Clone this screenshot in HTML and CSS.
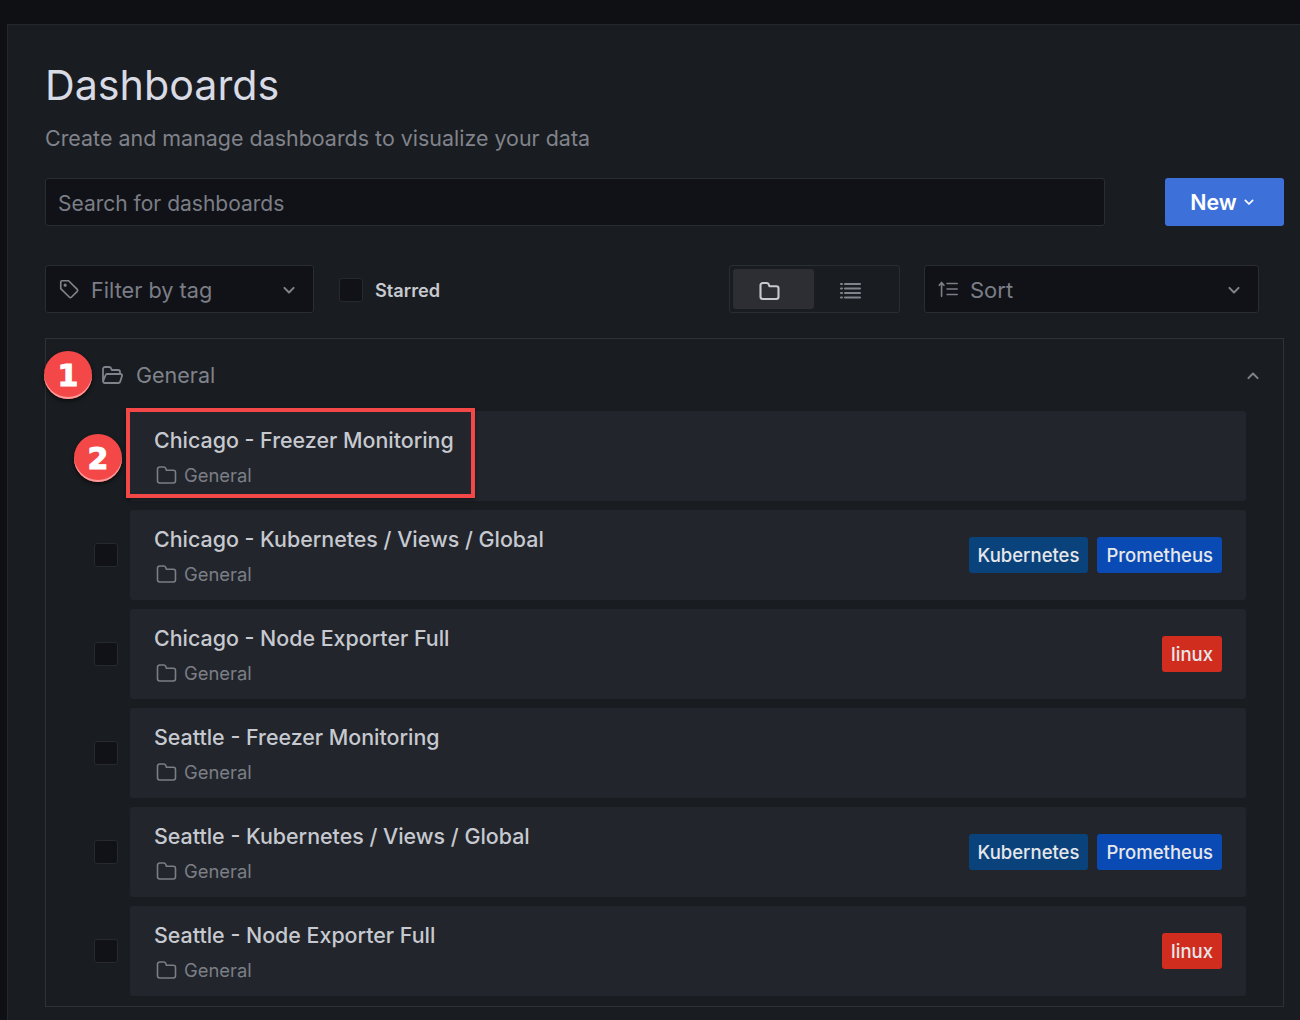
FILE: index.html
```html
<!DOCTYPE html>
<html lang="en">
<head>
    <meta charset="UTF-8">
    <title>Dashboards</title>
    <link rel="stylesheet" href="styles.css">
</head>
<body>
<svg class="sprites" width="0" height="0">
    <symbol id="folder" viewBox="0 0 24 24"><path d="M3.5 6.2a2.2 2.2 0 0 1 2.2-2.2h4.1c.9 0 1.6.5 1.9 1.3l.7 1.9h6.9a2.2 2.2 0 0 1 2.2 2.2v8.4a2.2 2.2 0 0 1-2.2 2.2H5.7a2.2 2.2 0 0 1-2.2-2.2z"/></symbol>
    <symbol id="chevron" viewBox="0 0 24 24"><path d="M6.5 9.5 12 15l5.5-5.500"/></symbol>
</svg>
<main class="panel">
    <h1 class="title">Dashboards</h1>
    <p class="subtitle">Create and manage dashboards to visualize your data</p>

    <div class="search-row">
        <div class="input search">Search for dashboards</div>
        <button class="new-button">New <svg class="icon"><use href="#chevron"/></svg></button>
    </div>

    <div class="filter-row">
        <div class="input filter">
            <svg class="icon tag-icon" viewBox="0 0 24 24"><path d="M3 4.500A1.500 1.500 0 0 1 4.500 3h7l9.500 9.500a1.500 1.500 0 0 1 0 2.100L14.600 21a1.500 1.500 0 0 1-2.100 0L3 11.500z"/><circle cx="7.800" cy="7.800" r=".8"/></svg>
            <span class="grow">Filter by tag</span>
            <svg class="icon chevron"><use href="#chevron"/></svg>
        </div>
        <label class="starred"><span class="checkbox"></span>Starred</label>
        <div class="toggle">
            <span class="toggle-item active"><svg class="icon"><use href="#folder"/></svg></span>
            <span class="toggle-item">
                <svg class="icon" viewBox="0 0 24 24"><path d="M3 6.500h1M7 6.500h15M3 11h1M7 11h15M3 15.500h1M7 15.500h15M3 20h1M7 20h15" transform="translate(0 -1.500)"/></svg>
            </span>
        </div>
        <div class="input sort">
            <svg class="icon sort-icon" viewBox="0 0 24 24"><path d="M5 20V5M2.500 8 5 5l2.500 3M11 6h11M11 12h11M11 18h11"/></svg>
            <span class="grow">Sort</span>
            <svg class="icon chevron"><use href="#chevron"/></svg>
        </div>
    </div>

    <section class="results">
        <header class="section-header">
            <span class="marker marker-one">1</span>
            <svg class="icon open-folder" viewBox="0 0 24 24"><path d="M3 18.500V6a2 2 0 0 1 2-2h4.200c.8 0 1.500.5 1.800 1.200L11.700 7H18a2 2 0 0 1 2 2v2M3 18.500 5.600 12a1.500 1.500 0 0 1 1.400-1h13.600a1.500 1.500 0 0 1 1.400 2l-1.800 5.600a2 2 0 0 1-1.900 1.400H5a2 2 0 0 1-2-1.500z"/></svg>
            <span class="grow">General</span>
            <svg class="icon collapse"><use href="#chevron"/></svg>
        </header>

        <div class="item">
            <span class="item-check"></span>
            <span class="marker marker-two">2</span>
            <a class="card">
                <span class="highlight"></span>
                <div class="card-text">
                    <div class="card-title">Chicago - Freezer Monitoring</div>
                    <div class="card-folder"><svg class="icon"><use href="#folder"/></svg>General</div>
                </div>
            </a>
        </div>
        <div class="item">
            <span class="item-check"><span class="checkbox"></span></span>
            <a class="card">
                <div class="card-text">
                    <div class="card-title">Chicago - Kubernetes / Views / Global</div>
                    <div class="card-folder"><svg class="icon"><use href="#folder"/></svg>General</div>
                </div>
                <span class="tag tag-kubernetes">Kubernetes</span>
                <span class="tag tag-prometheus">Prometheus</span>
            </a>
        </div>
        <div class="item">
            <span class="item-check"><span class="checkbox"></span></span>
            <a class="card">
                <div class="card-text">
                    <div class="card-title">Chicago - Node Exporter Full</div>
                    <div class="card-folder"><svg class="icon"><use href="#folder"/></svg>General</div>
                </div>
                <span class="tag tag-linux">linux</span>
            </a>
        </div>
        <div class="item">
            <span class="item-check"><span class="checkbox"></span></span>
            <a class="card">
                <div class="card-text">
                    <div class="card-title">Seattle - Freezer Monitoring</div>
                    <div class="card-folder"><svg class="icon"><use href="#folder"/></svg>General</div>
                </div>
            </a>
        </div>
        <div class="item">
            <span class="item-check"><span class="checkbox"></span></span>
            <a class="card">
                <div class="card-text">
                    <div class="card-title">Seattle - Kubernetes / Views / Global</div>
                    <div class="card-folder"><svg class="icon"><use href="#folder"/></svg>General</div>
                </div>
                <span class="tag tag-kubernetes">Kubernetes</span>
                <span class="tag tag-prometheus">Prometheus</span>
            </a>
        </div>
        <div class="item">
            <span class="item-check"><span class="checkbox"></span></span>
            <a class="card">
                <div class="card-text">
                    <div class="card-title">Seattle - Node Exporter Full</div>
                    <div class="card-folder"><svg class="icon"><use href="#folder"/></svg>General</div>
                </div>
                <span class="tag tag-linux">linux</span>
            </a>
        </div>
    </section>
</main>
</body>
</html>
```

FILE: styles.css
```css
html, body {
    height: 100%;
}

body {
    margin: 0;
    padding-top: 24px;
    box-sizing: border-box;
    overflow: hidden;
    background-color: #0f1014;
    font-family: Inter, "Liberation Sans", sans-serif;
    color: #c7c9d0;
}

.sprites {
    position: absolute;
}

.icon {
    width: 24px;
    height: 24px;
    fill: none;
    stroke: currentColor;
    stroke-width: 1.8;
    stroke-linecap: round;
    stroke-linejoin: round;
    flex: none;
}

.grow {
    flex: 1;
}

.panel {
    height: 100%;
    margin-left: 7px;
    padding: 0 16px 0 37px;
    border: 1px solid #24272c;
    border-right: none;
    background-color: #191c20;
}

.title {
    margin: 0;
    padding-top: 35px;
    font-size: 41.2px;
    font-weight: 400;
    line-height: 50px;
    color: #d8dae4;
}

.subtitle {
    margin: 14px 0 0;
    font-size: 21.45px;
    line-height: 28px;
    color: #80838b;
}

.input {
    display: flex;
    align-items: center;
    box-sizing: border-box;
    height: 48px;
    padding: 2px 12px 0;
    border: 1px solid #2a2d33;
    border-radius: 3px;
    background-color: #111217;
    font-size: 21px;
    color: #7b7e86;
}

.search-row {
    display: flex;
    justify-content: space-between;
    margin-top: 26px;
}

.search {
    width: 1060px;
    padding-top: 3px;
}

.new-button {
    display: flex;
    align-items: center;
    justify-content: center;
    gap: 4px;
    width: 119px;
    height: 48px;
    padding: 0 2px 0 0;
    border: none;
    border-radius: 3px;
    background-color: #3d71d9;
    font: 600 21.4px Inter, "Liberation Sans", sans-serif;
    color: #fff;
}

.new-button .icon {
    width: 16px;
    height: 16px;
    stroke-width: 2.600;
}

.filter-row {
    display: flex;
    align-items: center;
    margin-top: 39px;
}

.filter {
    width: 269px;
    font-size: 21.7px;
}

.tag-icon {
    margin-right: 11px;
    margin-top: -2px;
    width: 22px;
    height: 22px;
    color: #80838b;
}

.chevron {
    width: 20px;
    height: 20px;
    margin-right: 2px;
    stroke-width: 2.400;
    color: #80838b;
}

.starred {
    display: flex;
    align-items: center;
    gap: 12px;
    margin: 2px 0 0 25px;
    width: 390px;
    font-size: 18.2px;
    font-weight: 600;
    color: #c7c9d0;
}

.checkbox {
    display: block;
    box-sizing: border-box;
    width: 24px;
    height: 24px;
    border: 1px solid #26292e;
    border-radius: 3px;
    background-color: #111217;
}

.toggle {
    display: flex;
    box-sizing: border-box;
    width: 171px;
    height: 48px;
    padding: 3px;
    border: 1px solid #2a2d33;
    border-radius: 3px;
}

.toggle-item {
    display: flex;
    align-items: center;
    justify-content: center;
    width: 81px;
    padding: 3px 10px 0 0;
    box-sizing: border-box;
    color: #80838b;
}

.toggle-item .icon {
    stroke-width: 2.100;
}

.toggle-item.active {
    border-radius: 3px;
    background-color: #2c2e33;
    color: #c7c9d0;
}

.sort {
    width: 335px;
    margin-left: 24px;
    font-size: 22px;
}

.sort-icon {
    width: 22px;
    height: 22px;
    margin-right: 11px;
    margin-top: -2px;
    stroke-width: 1.800;
}

.results {
    box-sizing: border-box;
    height: 669px;
    margin-top: 25px;
    padding-right: 37px;
    border: 1px solid #2f3237;
}

.section-header {
    position: relative;
    display: flex;
    align-items: center;
    height: 72px;
    padding-left: 54px;
    box-sizing: border-box;
    font-size: 21.5px;
    color: #80838b;
}

.open-folder {
    margin-right: 12px;
}

.collapse {
    margin-right: -17px;
    margin-top: 2px;
    width: 20px;
    height: 20px;
    stroke-width: 2.400;
    transform: rotate(180deg);
}

.item {
    position: relative;
    display: flex;
    align-items: center;
    margin-bottom: 9px;
}

.item-check {
    width: 84px;
    padding-left: 48px;
    box-sizing: border-box;
}

.card {
    position: relative;
    display: flex;
    align-items: center;
    gap: 9px;
    box-sizing: border-box;
    flex: 1;
    height: 90px;
    padding: 0 24px;
    border-radius: 3px;
    background-color: #22252b;
}

.card-text {
    flex: 1;
}

.card-title {
    font-size: 21.4px;
    font-weight: 500;
    line-height: 28px;
    color: #c7c9d0;
}

.card-folder {
    display: flex;
    align-items: center;
    gap: 6px;
    margin-top: 9px;
    font-size: 18.4px;
    line-height: 24px;
    color: #7b7e86;
}

.card-folder .icon {
    stroke-width: 1.600;
}

.tag {
    padding: 0 9px;
    height: 36px;
    border-radius: 3px;
    font-size: 18.5px;
    font-weight: 500;
    line-height: 36px;
    color: #e6e7ea;
}

.tag-kubernetes {
    background-color: #0a437c;
}

.tag-prometheus {
    background-color: #0a4ab4;
}

.tag-linux {
    background-color: #d12d1f;
}

/* annotations drawn on top of the screenshot */
.marker {
    position: absolute;
    display: flex;
    align-items: center;
    justify-content: center;
    width: 48px;
    height: 48px;
    border-radius: 50%;
    background-color: #f44848;
    box-shadow: 0 2px 4px rgba(0, 0, 0, 0.6), inset 0 -2px 0 #ff9a9a;
    font-family: "DejaVu Sans", sans-serif;
    font-size: 30px;
    font-weight: 700;
    color: #fff;
    -webkit-text-stroke: 1px #fff;
    z-index: 2;
}

.marker-one {
    left: -2px;
    top: 12px;
}

.marker-two {
    left: 28px;
    top: 23px;
}

.highlight {
    position: absolute;
    left: -4px;
    top: -3px;
    width: 349px;
    height: 90px;
    box-sizing: border-box;
    border: 4px solid #f44848;
    box-shadow: 0 2px 4px rgba(0, 0, 0, 0.4);
}
```
